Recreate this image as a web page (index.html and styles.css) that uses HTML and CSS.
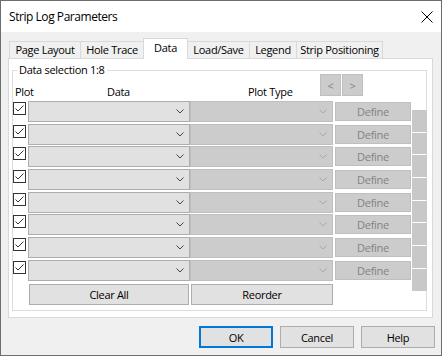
FILE: index.html
```html
<!DOCTYPE html>
<html lang="en">
<head>
    <meta charset="UTF-8">
    <title>Strip Log Parameters</title>
    <link rel="stylesheet" href="styles.css">
</head>
<body>
    <div class="window">
        <div class="titlebar">
            <span class="title">Strip Log Parameters</span>
            <svg class="close" width="12" height="12" viewBox="0 0 12 12">
                <path d="M0.5 0.5 L11.5 11.5 M11.5 0.5 L0.5 11.5" stroke="#000" stroke-width="1" fill="none"/>
            </svg>
        </div>

        <div class="client">
            <div class="tabs">
                <div class="tab tab-page">Page Layout</div>
                <div class="tab tab-hole">Hole Trace</div>
                <div class="tab tab-data active">Data</div>
                <div class="tab tab-load">Load/Save</div>
                <div class="tab tab-legend">Legend</div>
                <div class="tab tab-strip">Strip Positioning</div>
            </div>

            <div class="panel">
                <div class="group">
                    <span class="group-title">Data selection 1:8</span>
                    <div class="head">
                        <span class="label col-plot">Plot</span>
                        <span class="label col-data">Data</span>
                        <span class="label col-type">Plot Type</span>
                        <div class="pager">
                            <button class="btn off small">&lt;</button>
                            <button class="btn off small">&gt;</button>
                        </div>
                    </div>

                    <div class="grid">
                        <div class="rows" id="rows">
                            <div class="actions">
                                <button class="btn clear">Clear All</button>
                                <button class="btn reorder">Reorder</button>
                            </div>
                        </div>
                        <div class="scroll" id="scroll"></div>
                    </div>
                </div>
            </div>

            <div class="footer">
                <button class="btn dlg default">OK</button>
                <button class="btn dlg">Cancel</button>
                <button class="btn dlg">Help</button>
            </div>
        </div>
    </div>

    <script>
        // 8 data slots, all checked
        const rows = document.getElementById('rows');
        const actions = rows.querySelector('.actions');
        const scroll = document.getElementById('scroll');
        const chevron = '<svg width="8" height="5" viewBox="0 0 8 5"><path d="M0.5 0.5 L4 4 L7.5 0.5" fill="none" stroke="currentColor" stroke-width="1"/></svg>';

        for (let i = 0; i < 8; i++) {
            const row = document.createElement('div');
            row.className = 'row';
            row.innerHTML =
                '<span class="check"><svg width="11" height="11" viewBox="0 0 11 11"><path d="M1.5 5.5 L4 8 L9.5 2.5" fill="none" stroke="#333" stroke-width="1"/></svg></span>' +
                '<span class="combo data">' + chevron + '</span>' +
                '<span class="combo type">' + chevron + '</span>' +
                '<button class="btn off define">Define</button>';
            rows.insertBefore(row, actions);

            const seg = document.createElement('div');
            seg.className = 'seg';
            scroll.appendChild(seg);
        }
    </script>
</body>
</html>
```

FILE: styles.css
```css
body {
    margin: 0;
    font-family: "Open Sans", "Noto Sans", sans-serif;
    font-size: 11px;
    letter-spacing: -0.3px;
    color: #000;
}
.window {
    width: 442px;
    height: 356px;
    box-sizing: border-box;
    border: 1px solid #6d6d6d;
    background-color: #f0f0f0;
    display: flex;
    flex-direction: column;
}
.titlebar {
    height: 31px;
    flex: none;
    background-color: #fff;
    display: flex;
    align-items: center;
    justify-content: space-between;
    padding: 0 8px;
    font-size: 12px;
    letter-spacing: -0.45px;
}
.close {
    margin-top: 1px;
}
.client {
    flex: 1;
    padding: 6px 8px 0 7px;
}

/* tabs */
.tabs {
    display: flex;
    align-items: flex-end;
    height: 20px;
    margin-left: 1px;
}
.tab {
    box-sizing: border-box;
    height: 17px;
    border: 1px solid #d9d9d9;
    border-bottom: none;
    margin-right: -1px;
    text-align: center;
    line-height: 16px;
    white-space: nowrap;
}
.tab.active {
    height: 21px;
    margin-bottom: -1px;
    background-color: #fff;
    line-height: 17px;
    position: relative;
    z-index: 1;
}
.tab-page { width: 72px; }
.tab-hole { width: 64px; }
.tab-data { width: 45px; }
.tab-load { width: 63px; }
.tab-legend { width: 48px; }
.tab-strip { width: 87px; }

.panel {
    width: 425px;
    height: 260px;
    box-sizing: border-box;
    border: 1px solid #d9d9d9;
    background-color: #fff;
    padding: 11px 0 0 3px;
}
.group {
    position: relative;
    width: 415px;
    height: 241px;
    box-sizing: border-box;
    border: 1px solid #dcdcdc;
    padding-top: 3px;
}
.group-title {
    position: absolute;
    left: 4px;
    top: -9px;
    padding: 0 2px;
    background-color: #fff;
    line-height: 15px;
}

/* header line */
.head {
    display: flex;
    height: 22px;
}
.label {
    align-self: flex-end;
    line-height: 15px;
    margin-bottom: -3px;
}
.col-plot { width: 92px; padding-left: 2px; }
.col-data { width: 141px; }
.col-type { width: 72px; }
.pager {
    display: flex;
    gap: 1px;
}

/* buttons */
.btn {
    box-sizing: border-box;
    margin: 0;
    padding: 0;
    font-family: inherit;
    font-size: 11px;
    letter-spacing: inherit;
    color: #000;
    background-color: #e1e1e1;
    border: 1px solid #adadad;
}
.btn.off {
    background-color: #cccccc;
    border-color: #bfbfbf;
    color: #838383;
}
.btn.small {
    width: 21px;
    height: 22px;
}

/* data rows */
.grid {
    display: flex;
    margin-top: 5px;
}
.rows {
    display: flex;
    flex-direction: column;
    gap: 1.7px;
}
.row {
    display: flex;
    height: 21px;
}
.check {
    box-sizing: border-box;
    width: 13px;
    height: 13px;
    margin: 1px 2px 0 0;
    border: 1px solid #333;
    background-color: #fff;
    display: flex;
}
.combo {
    box-sizing: border-box;
    height: 21px;
    display: flex;
    align-items: center;
    justify-content: flex-end;
    padding-right: 5px;
    border: 1px solid #adadad;
    background-color: #e1e1e1;
    color: #444;
}
.combo svg {
    display: block;
}
.combo.data { width: 162px; }
.combo.type {
    width: 143px;
    border-color: #bfbfbf;
    background-color: #cccccc;
    color: #a8a8a8;
}
.define {
    width: 76px;
    height: 19px;
    margin: 1px 0 0 2px;
}
.actions {
    display: flex;
    gap: 2px;
    margin: 1.4px 0 0 16px;
}
.actions .btn {
    height: 21px;
}
.clear { width: 160px; }
.reorder { width: 142px; }

.scroll {
    width: 15px;
    margin: 9px -1px 0 1px;
    display: flex;
    flex-direction: column;
    gap: 1px;
}
.seg {
    height: 21.7px;
    background-color: #c8c8c8;
}

/* dialog buttons */
.footer {
    display: flex;
    justify-content: flex-end;
    gap: 7px;
    margin: 8px -2px 0 0;
}
.btn.dlg {
    width: 74px;
    height: 22px;
}
.btn.default {
    border: 2px solid #0078d7;
}
```
